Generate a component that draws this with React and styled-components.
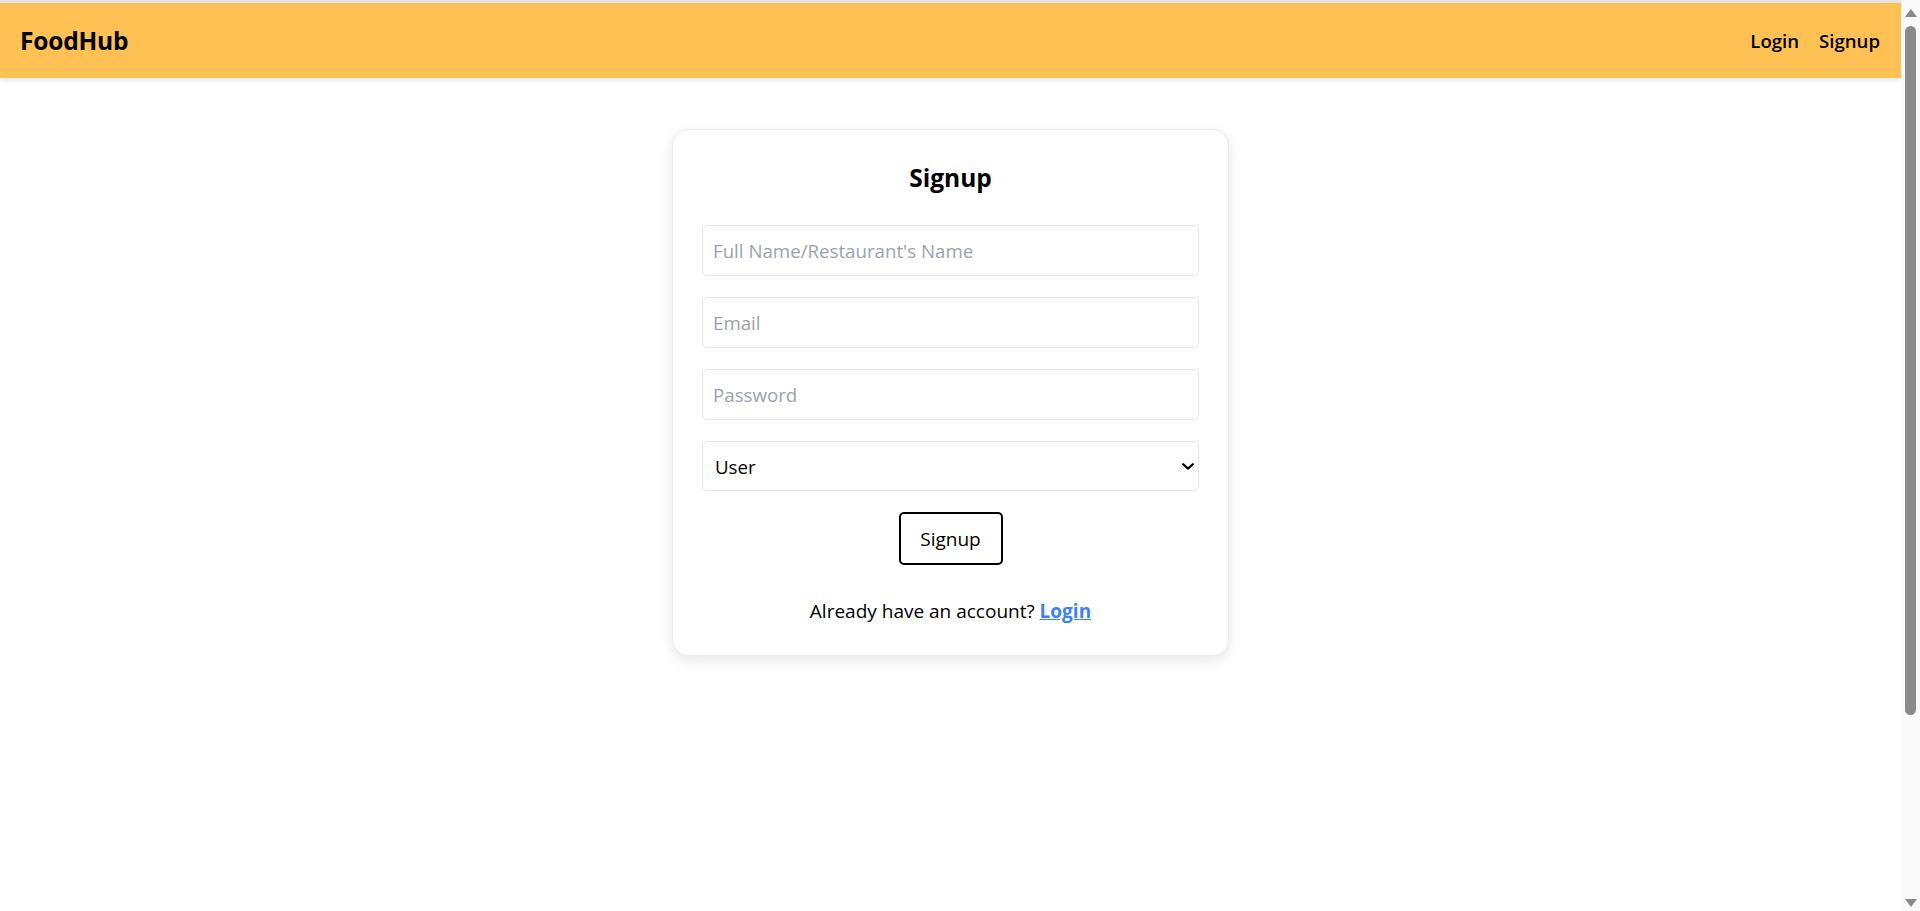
import styled, { createGlobalStyle } from "styled-components";
import { useState } from "react";

const GlobalStyle = createGlobalStyle`
    html, body {
        margin: 0;
        padding: 0;
        background-color: white;
    }
    body {
        font-family: "Open Sans", "Noto Sans", sans-serif;
        color: #000;
    }
    * {
        box-sizing: border-box;
    }
`;

//전체
const Page = styled.div`
    width: calc(100% - 19px);
    min-height: 911px;
    display: flex;
    flex-direction: column;
`;

//스크롤바 (창 오른쪽)
const ScrollTrack = styled.div`
    position: fixed;
    top: 0;
    right: 0;
    width: 19px;
    height: 100vh;
    background-color: #fafafa;
`;

const ScrollThumb = styled.div`
    position: absolute;
    left: 4px;
    top: 26px;
    width: 11px;
    height: 689px;
    border-radius: 6px;
    background-color: #8a8a8a;
`;

const ScrollArrow = styled.div`
    position: absolute;
    left: 3.5px;
    ${(p) => (p.$down ? "bottom: 4px;" : "top: 9px;")}
    width: 0;
    height: 0;
    border-left: 6px solid transparent;
    border-right: 6px solid transparent;
    ${(p) =>
        p.$down
            ? "border-top: 8px solid #8a8a8a;"
            : "border-bottom: 8px solid #8a8a8a;"}
`;

//헤더
const Navbar = styled.nav`
    height: 78px;
    display: flex;
    align-items: center;
    justify-content: space-between;
    padding: 0 21px 0 20px;
    background-color: #ffc153;
    border-top: 3px solid #e3e3e3;
    box-shadow: 0 2px 6px rgba(0, 0, 0, 0.12);
`;

const Brand = styled.div`
    font-size: 24.5px;
    font-weight: 700;
    letter-spacing: -0.2px;
`;

const NavLinks = styled.div`
    display: flex;
    align-items: center;
    gap: 20px;
`;

const NavLink = styled.a`
    font-size: 18.6px;
    font-weight: 600;
    color: #000;
    text-decoration: none;
    cursor: pointer;
`;

//카드
const Main = styled.main`
    display: flex;
    justify-content: center;
    padding-top: 51px;
`;

const Card = styled.div`
    width: 557px;
    padding: 32px 29px 30px 29px;
    display: flex;
    flex-direction: column;
    background-color: white;
    border: 1px solid #ececec;
    border-radius: 16px;
    box-shadow: 0 4px 14px rgba(0, 0, 0, 0.1);
`;

const Title = styled.h2`
    margin: 0 0 31px 0;
    font-size: 24.5px;
    line-height: 32px;
    font-weight: 700;
    text-align: center;
`;

const Form = styled.form`
    display: flex;
    flex-direction: column;
    gap: 21px;
`;

const Input = styled.input`
    width: 100%;
    height: 51px;
    padding: 0 10px;
    border: 1px solid #e5e7eb;
    border-radius: 5px;
    font-family: inherit;
    font-size: 18.7px;
    color: #000;
    outline: none;

    &::placeholder {
        color: #9ca3af;
    }
`;

const SelectWrap = styled.div`
    position: relative;
    width: 100%;
`;

const Select = styled.select`
    width: 100%;
    height: 50px;
    padding: 0 30px 0 12px;
    border: 1px solid #e5e7eb;
    border-radius: 5px;
    background-color: white;
    font-family: inherit;
    font-size: 18.7px;
    color: #000;
    appearance: none;
    outline: none;
`;

const Chevron = styled.svg`
    position: absolute;
    right: 5px;
    top: 22px;
    width: 12px;
    height: 7px;
    pointer-events: none;
`;

const SubmitButton = styled.button`
    align-self: center;
    width: 104px;
    height: 53px;
    border: 2px solid #000;
    border-radius: 5px;
    background-color: white;
    font-family: inherit;
    font-size: 19px;
    color: #000;
    cursor: pointer;
`;

const Footer = styled.p`
    margin: 32px 0 0 0;
    font-size: 19px;
    line-height: 28px;
    text-align: center;
`;

const LoginLink = styled.a`
    color: #3b82f6;
    font-weight: 700;
    text-decoration: underline;
    cursor: pointer;
`;

export default function App() {
    const [role, setRole] = useState("user");

    return (
        <Page>
            <GlobalStyle />
            <Navbar>
                <Brand>FoodHub</Brand>
                <NavLinks>
                    <NavLink>Login</NavLink>
                    <NavLink>Signup</NavLink>
                </NavLinks>
            </Navbar>

            <Main>
                <Card>
                    <Title>Signup</Title>
                    <Form onSubmit={(e) => e.preventDefault()}>
                        <Input type="text" placeholder="Full Name/Restaurant's Name" />
                        <Input type="email" placeholder="Email" />
                        <Input type="password" placeholder="Password" />
                        <SelectWrap>
                            <Select value={role} onChange={(e) => setRole(e.target.value)}>
                                <option value="user">User</option>
                                <option value="restaurant">Restaurant</option>
                            </Select>
                            <Chevron viewBox="0 0 12 7">
                                <polyline
                                    points="1.2,1.2 6,5.6 10.8,1.2"
                                    fill="none"
                                    stroke="#000"
                                    strokeWidth="2.2"
                                    strokeLinecap="round"
                                    strokeLinejoin="round"
                                />
                            </Chevron>
                        </SelectWrap>
                        <SubmitButton type="submit">Signup</SubmitButton>
                    </Form>
                    <Footer>
                        Already have an account? <LoginLink>Login</LoginLink>
                    </Footer>
                </Card>
            </Main>

            <ScrollTrack>
                <ScrollArrow />
                <ScrollThumb />
                <ScrollArrow $down />
            </ScrollTrack>
        </Page>
    );
}
